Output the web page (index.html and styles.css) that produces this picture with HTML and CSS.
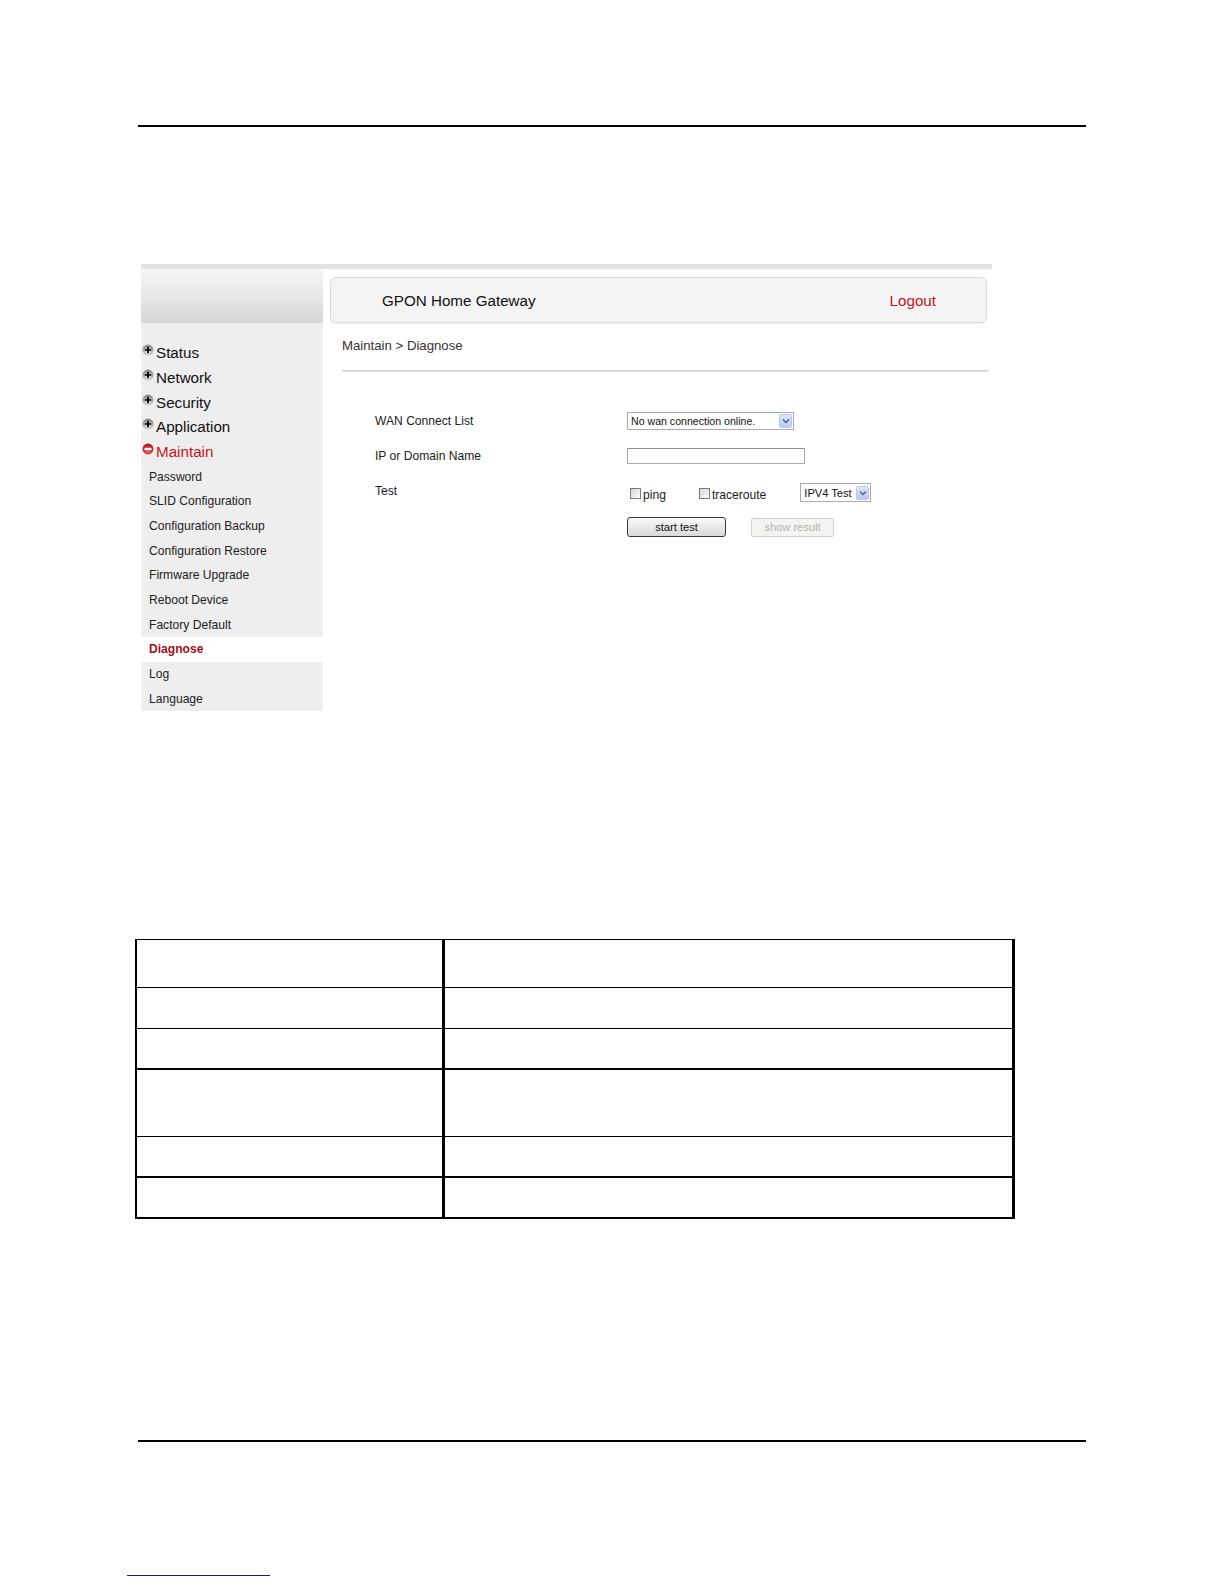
FILE: index.html
```html
<!DOCTYPE html>
<html lang="en">
<head>
    <meta charset="UTF-8">
    <title>GPON Home Gateway - Diagnose</title>
    <link rel="stylesheet" href="styles.css">
</head>
<body>
    <div class="doc-rule top-rule"></div>

    <div class="shot">
        <aside class="sidebar">
            <div class="side-head"></div>
            <ul class="side-menu">
                <li class="menu-item">
                    <svg class="bullet" viewBox="0 0 11 11"><defs><radialGradient id="g1" cx="50%" cy="70%" r="60%"><stop offset="0" stop-color="#f4f4f4"/><stop offset="1" stop-color="#8c8c8c"/></radialGradient></defs><circle cx="5.5" cy="5.5" r="5" fill="url(#g1)"/><path d="M5.5 2.5v6M2.5 5.5h6" stroke="#000" stroke-width="1.6"/></svg>Status
                </li>
                <li class="menu-item">
                    <svg class="bullet" viewBox="0 0 11 11"><circle cx="5.5" cy="5.5" r="5" fill="url(#g1)"/><path d="M5.5 2.5v6M2.5 5.5h6" stroke="#000" stroke-width="1.6"/></svg>Network
                </li>
                <li class="menu-item">
                    <svg class="bullet" viewBox="0 0 11 11"><circle cx="5.5" cy="5.5" r="5" fill="url(#g1)"/><path d="M5.5 2.5v6M2.5 5.5h6" stroke="#000" stroke-width="1.6"/></svg>Security
                </li>
                <li class="menu-item">
                    <svg class="bullet" viewBox="0 0 11 11"><circle cx="5.5" cy="5.5" r="5" fill="url(#g1)"/><path d="M5.5 2.5v6M2.5 5.5h6" stroke="#000" stroke-width="1.6"/></svg>Application
                </li>
                <li class="menu-item open">
                    <svg class="bullet" viewBox="0 0 11 11"><defs><radialGradient id="g2" cx="50%" cy="65%" r="60%"><stop offset="0" stop-color="#f26a72"/><stop offset="1" stop-color="#b3121c"/></radialGradient></defs><circle cx="5.5" cy="5.5" r="5" fill="url(#g2)"/><path d="M2.3 5.5h6.4" stroke="#fff" stroke-width="2"/></svg>Maintain
                </li>
                <li class="sub-item">Password</li>
                <li class="sub-item">SLID Configuration</li>
                <li class="sub-item">Configuration Backup</li>
                <li class="sub-item">Configuration Restore</li>
                <li class="sub-item">Firmware Upgrade</li>
                <li class="sub-item">Reboot Device</li>
                <li class="sub-item">Factory Default</li>
                <li class="sub-item active">Diagnose</li>
                <li class="sub-item">Log</li>
                <li class="sub-item">Language</li>
            </ul>
        </aside>

        <main class="content">
            <div class="top-bar">
                <span class="brand">GPON Home Gateway</span>
                <span class="logout">Logout</span>
            </div>

            <div class="crumb">Maintain &gt; Diagnose</div>
            <div class="crumb-rule"></div>

            <div class="form">
                <div class="label">WAN Connect List</div>
                <div class="field">
                    <span class="fake-select wan-select">
                        <span class="sel-text">No wan connection online.</span>
                        <span class="sel-arrow"><svg viewBox="0 0 8 6"><path d="M1 1.5l3 3 3-3" fill="none" stroke="#4a5f86" stroke-width="1.4"/></svg></span>
                    </span>
                </div>

                <div class="label">IP or Domain Name</div>
                <div class="field">
                    <span class="text-input"></span>
                </div>

                <div class="label">Test</div>
                <div class="field test-row">
                    <span class="check"></span><span class="check-text ping">ping</span>
                    <span class="check"></span><span class="check-text trace">traceroute</span>
                    <span class="fake-select ip-select">
                        <span class="sel-text">IPV4 Test</span>
                        <span class="sel-arrow"><svg viewBox="0 0 8 6"><path d="M1 1.5l3 3 3-3" fill="none" stroke="#4a5f86" stroke-width="1.4"/></svg></span>
                    </span>
                </div>

                <div class="label"></div>
                <div class="field button-row">
                    <span class="btn">start test</span>
                    <span class="btn disabled">show result</span>
                </div>
            </div>
        </main>
    </div>

    <table class="spec">
        <tr class="r1"><td class="c1"></td><td></td></tr>
        <tr class="r2"><td class="c1"></td><td></td></tr>
        <tr class="r3"><td class="c1"></td><td></td></tr>
        <tr class="r4 thick"><td class="c1"></td><td></td></tr>
        <tr class="r5"><td class="c1"></td><td></td></tr>
        <tr class="r6 thick"><td class="c1"></td><td></td></tr>
    </table>

    <div class="doc-rule bottom-rule"></div>

    <div class="foot-link"></div>
</body>
</html>
```

FILE: styles.css
```css
body {
    margin: 0;
    background: #fff;
    font-family: "Liberation Sans", Arial, sans-serif;
    color: #111;
}

.doc-rule {
    margin-left: 138px;
    width: 948px;
    height: 2px;
    background: #000;
}

.top-rule {
    margin-top: 125px;
}

/* screenshot of the router page */
.shot {
    margin: 137px 0 0 141px;
    width: 851px;
    display: grid;
    grid-template-columns: 182px 669px;
    border-top: 5px solid #e3e3e3;
}

.sidebar {
    display: flex;
    flex-direction: column;
}

.side-head {
    height: 54px;
    background: linear-gradient(#f6f6f6, #e9e9e9 45%, #d6d6d6);
}

.side-menu {
    list-style: none;
    margin: 0;
    padding: 18px 0 0;
    background: #eeeeee;
}

.menu-item {
    height: 24.75px;
    line-height: 24.75px;
    font-size: 15.2px;
    color: #111;
    padding-left: 1px;
    white-space: nowrap;
}

.menu-item.open {
    color: #c4161c;
}

.bullet {
    width: 12px;
    height: 12px;
    margin-right: 2px;
    vertical-align: 2px;
}

.sub-item {
    height: 24.65px;
    line-height: 24.65px;
    font-size: 12.1px;
    color: #222;
    padding-left: 8px;
}

.sub-item.active {
    background: #fff;
    color: #a01020;
    font-weight: bold;
}

.content {
    padding-left: 7px;
}

.top-bar {
    box-sizing: border-box;
    margin-top: 8px;
    width: 657px;
    height: 46px;
    border: 1px solid #dadada;
    border-radius: 6px;
    background: #f4f4f4;
    box-shadow: 0 1px 1px rgba(0,0,0,0.05);
    display: flex;
    align-items: center;
    justify-content: space-between;
    padding: 0 50px 0 51px;
    font-size: 15.2px;
}

.brand {
    color: #111;
}

.logout {
    color: #c0141c;
}

.crumb {
    margin: 13px 0 0 12px;
    height: 20px;
    line-height: 20px;
    font-size: 13.2px;
    color: #333;
}

.crumb-rule {
    margin: 14px 0 0 12px;
    width: 647px;
    border-top: 1px solid #cfcfcf;
    border-bottom: 1px solid #e6e6e6;
}

.form {
    margin-top: 31px;
    display: grid;
    grid-template-columns: 252px 1fr;
    grid-auto-rows: 35.4px;
    padding-left: 45px;
    font-size: 12.1px;
}

.label {
    display: flex;
    align-items: center;
    color: #222;
}

.field {
    display: flex;
    align-items: center;
}

.fake-select {
    box-sizing: border-box;
    display: inline-flex;
    align-items: center;
    justify-content: space-between;
    border: 1px solid #a5acb2;
    background: #fff;
    padding: 0 1px 0 3px;
    color: #111;
}

.wan-select {
    width: 167px;
    height: 18px;
    font-size: 10.6px;
}

.ip-select {
    width: 71px;
    height: 19px;
    font-size: 11.1px;
    margin-top: 3px;
}

.sel-arrow {
    box-sizing: border-box;
    width: 13px;
    height: 14px;
    border: 1px solid #b8c8f0;
    border-radius: 2px;
    background: linear-gradient(#dde6fd, #b7c9f6);
    display: flex;
    align-items: center;
    justify-content: center;
}

.sel-arrow svg {
    width: 8px;
    height: 6px;
}

.text-input {
    box-sizing: border-box;
    width: 178px;
    height: 16px;
    border: 1px solid #a9a9a9;
    border-top-color: #8e8e8e;
    background: #fff;
}

.test-row .check {
    box-sizing: border-box;
    width: 11px;
    height: 11px;
    border: 1px solid #6d7b93;
    background: linear-gradient(135deg, #d8d8d8, #fbfbfb);
    margin-top: 5px;
}

.test-row .check:first-child {
    margin-left: 3px;
}

.check-text {
    margin: 7px 0 0 2px;
    color: #222;
}

.check-text.ping {
    margin-right: 33px;
}

.check-text.trace {
    margin-right: 34px;
}

.button-row {
    gap: 25px;
    padding-top: 1px;
}

.btn {
    box-sizing: border-box;
    width: 99px;
    height: 20px;
    border: 1px solid #3a3a3a;
    border-radius: 3px;
    background: linear-gradient(#fafafa, #e9e9e9 50%, #d9d9d9);
    font-size: 11.1px;
    color: #111;
    display: flex;
    align-items: center;
    justify-content: center;
}

.btn.disabled {
    width: 83px;
    height: 19px;
    border-color: #d0d0d0;
    border-radius: 2px;
    background: #f3f3f1;
    color: #b4b4b4;
}

/* empty spec table below the screenshot */
.spec {
    margin: 228px 0 0 135px;
    width: 880px;
    border-collapse: collapse;
    border-left: 2px solid #000;
    border-right: 3px solid #000;
    border-top: 1px solid #000;
    border-bottom: 2px solid #000;
}

.spec td {
    border-top: 1px solid #000;
    padding: 0;
}

.spec td.c1 {
    width: 305px;
    border-right: 3px solid #000;
}

.spec tr.thick td {
    border-top: 2px solid #000;
}

.spec .r1 { height: 47.5px; }
.spec .r2 { height: 41.5px; }
.spec .r3 { height: 40.5px; }
.spec .r4 { height: 67.5px; }
.spec .r5 { height: 40.5px; }
.spec .r6 { height: 40.5px; }

.bottom-rule {
    margin-top: 221px;
}

.foot-link {
    margin: 133px 0 0 127px;
    width: 143px;
    border-bottom: 1px solid #1a1a8a;
}
```
